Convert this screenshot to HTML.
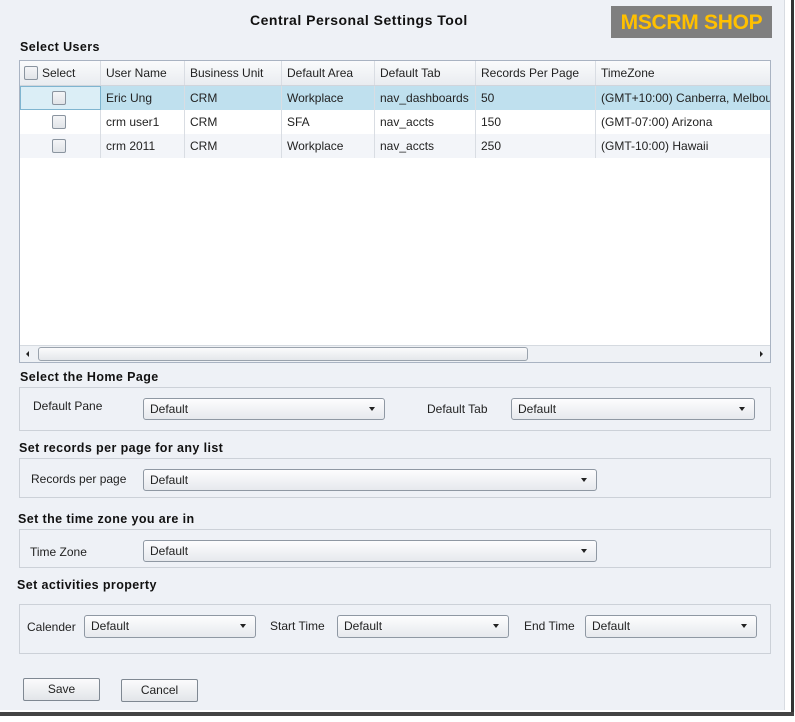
<!DOCTYPE html>
<html><head><meta charset="utf-8"><style>
*{box-sizing:border-box;margin:0;padding:0}
body{width:795px;height:722px;background:#fff;font-family:"Liberation Sans","DejaVu Sans",sans-serif;font-size:12px;color:#222;position:relative;overflow:hidden}
.frame{position:absolute;left:0;top:0;width:785px;height:710px;background:#eef1f6;border-right:1px solid #d8dce2}
.outer{position:absolute;left:791px;top:0;width:3px;height:716px;background:#333}
.outerb{position:absolute;left:0;top:712px;width:794px;height:4px;background:#444}
.a{position:absolute}
.h{font-weight:bold;font-size:12.5px;letter-spacing:0.4px;color:#111}
.grid{left:19px;top:60px;width:752px;height:303px;background:#fff;border:1px solid #a9b3c2}
.hdr{position:absolute;left:0;top:0;width:750px;height:25px;background:linear-gradient(#fafbfc,#e9ecf0);border-bottom:1px solid #d0d5dc}
.c{position:absolute;height:24px;line-height:24px;padding-left:5px;white-space:nowrap;overflow:hidden;border-right:1px solid #d9dde3}
.row{position:absolute;left:0;width:750px;height:24px}
.cb{position:absolute;width:14px;height:14px;border:1px solid #8a949f;border-radius:2px;background:linear-gradient(#f4f5f7,#e1e4e8)}
.box{border:1px solid #ccd1d8;background:#eef1f6}
.sel{position:absolute;height:22px;border:1px solid #8f98a3;border-radius:3px;background:linear-gradient(#fdfdfe,#e6e9ed);line-height:20px;padding-left:6px;font-size:12px}
.sel:after{content:"";position:absolute;right:9px;top:8px;border-left:3.5px solid transparent;border-right:3.5px solid transparent;border-top:4px solid #222}
.btn{position:absolute;height:23px;border:1px solid #7f8892;border-radius:2px;background:linear-gradient(#fbfbfc,#e2e5e9);text-align:center;line-height:21px}
</style></head><body>
<div class="frame"></div>
<div class="outer"></div><div class="outerb"></div>
<div class="a h" style="left:250px;top:12px;font-size:14px;letter-spacing:0.5px">Central Personal Settings Tool</div>
<div class="a" style="left:611px;top:6px;width:161px;height:32px;background:#7f7f7f;color:#ffc000;font-weight:bold;font-size:21px;line-height:33px;text-align:center;letter-spacing:-0.3px">MSCRM SHOP</div>
<div class="a h" style="left:20px;top:40px">Select Users</div>
<div class="a grid">
 <div class="hdr">
  <div class="c" style="left:0;width:81px;padding-left:22px">Select</div>
  <div class="cb" style="left:4px;top:5px"></div>
  <div class="c" style="left:81px;width:84px">User Name</div>
  <div class="c" style="left:165px;width:97px">Business Unit</div>
  <div class="c" style="left:262px;width:93px">Default Area</div>
  <div class="c" style="left:355px;width:101px">Default Tab</div>
  <div class="c" style="left:456px;width:120px">Records Per Page</div>
  <div class="c" style="left:576px;width:174px;border:none">TimeZone</div>
 </div>
 <div class="row" style="top:25px;background:#bfe0ee">
  <div class="a" style="left:0;top:0;width:81px;height:24px;border:1px solid #7fb5d0;background:#dbeef6"></div>
  <div class="cb" style="left:32px;top:5px"></div>
  <div class="c" style="left:81px;width:84px">Eric Ung</div>
  <div class="c" style="left:165px;width:97px">CRM</div>
  <div class="c" style="left:262px;width:93px">Workplace</div>
  <div class="c" style="left:355px;width:101px">nav_dashboards</div>
  <div class="c" style="left:456px;width:120px">50</div>
  <div class="c" style="left:576px;width:174px;border:none">(GMT+10:00) Canberra, Melbourne</div>
 </div>
 <div class="row" style="top:49px;background:#fff">
  <div class="c" style="left:0;width:81px"></div>
  <div class="cb" style="left:32px;top:5px"></div>
  <div class="c" style="left:81px;width:84px">crm user1</div>
  <div class="c" style="left:165px;width:97px">CRM</div>
  <div class="c" style="left:262px;width:93px">SFA</div>
  <div class="c" style="left:355px;width:101px">nav_accts</div>
  <div class="c" style="left:456px;width:120px">150</div>
  <div class="c" style="left:576px;width:174px;border:none">(GMT-07:00) Arizona</div>
 </div>
 <div class="row" style="top:73px;background:#f3f5f9">
  <div class="c" style="left:0;width:81px"></div>
  <div class="cb" style="left:32px;top:5px"></div>
  <div class="c" style="left:81px;width:84px">crm 2011</div>
  <div class="c" style="left:165px;width:97px">CRM</div>
  <div class="c" style="left:262px;width:93px">Workplace</div>
  <div class="c" style="left:355px;width:101px">nav_accts</div>
  <div class="c" style="left:456px;width:120px">250</div>
  <div class="c" style="left:576px;width:174px;border:none">(GMT-10:00) Hawaii</div>
 </div>
 <div class="a" style="left:0;top:284px;width:750px;height:17px;background:#eef1f5;border-top:1px solid #d5dae0">
  <div class="a" style="left:6px;top:5px;border-top:3px solid transparent;border-bottom:3px solid transparent;border-right:3px solid #222"></div>
  <div class="a" style="left:18px;top:1px;width:490px;height:14px;border:1px solid #9aa3ad;border-radius:3px;background:linear-gradient(#fbfbfc,#e4e7eb)"></div>
  <div class="a" style="left:740px;top:5px;border-top:3px solid transparent;border-bottom:3px solid transparent;border-left:3px solid #222"></div>
 </div>
</div>

<div class="a h" style="left:20px;top:370px">Select the Home Page</div>
<div class="a box" style="left:19px;top:387px;width:752px;height:44px"></div>
<div class="a" style="left:33px;top:399px">Default Pane</div>
<div class="sel" style="left:143px;top:398px;width:242px">Default</div>
<div class="a" style="left:427px;top:402px">Default Tab</div>
<div class="sel" style="left:511px;top:398px;width:244px">Default</div>

<div class="a h" style="left:19px;top:441px">Set records per page for any list</div>
<div class="a box" style="left:19px;top:458px;width:752px;height:40px"></div>
<div class="a" style="left:31px;top:472px">Records per page</div>
<div class="sel" style="left:143px;top:469px;width:454px">Default</div>

<div class="a h" style="left:18px;top:512px">Set the time zone you are in</div>
<div class="a box" style="left:19px;top:529px;width:752px;height:39px"></div>
<div class="a" style="left:30px;top:545px">Time Zone</div>
<div class="sel" style="left:143px;top:540px;width:454px">Default</div>

<div class="a h" style="left:17px;top:578px">Set activities property</div>
<div class="a box" style="left:19px;top:604px;width:752px;height:50px"></div>
<div class="a" style="left:27px;top:620px">Calender</div>
<div class="sel" style="left:84px;top:615px;width:172px;height:23px">Default</div>
<div class="a" style="left:270px;top:619px">Start Time</div>
<div class="sel" style="left:337px;top:615px;width:172px;height:23px">Default</div>
<div class="a" style="left:524px;top:619px">End Time</div>
<div class="sel" style="left:585px;top:615px;width:172px;height:23px">Default</div>

<div class="btn" style="left:23px;top:678px;width:77px">Save</div>
<div class="btn" style="left:121px;top:679px;width:77px">Cancel</div>
</body></html>
